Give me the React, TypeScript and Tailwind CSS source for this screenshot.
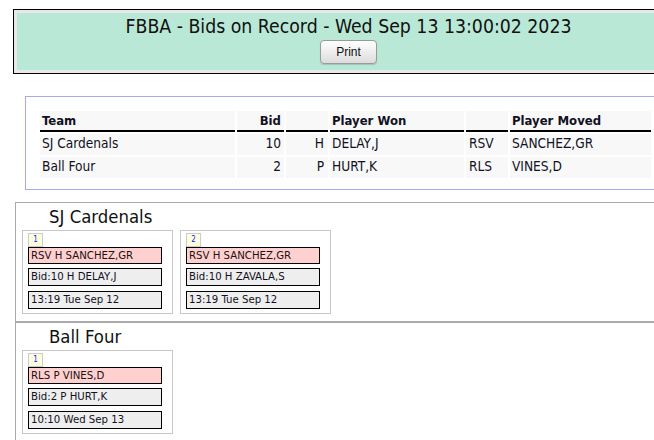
import React from "react";

const font = { fontFamily: '"DejaVu Sans Condensed", "DejaVu Sans", sans-serif' };

type Bid = { n: number; moved: string; bid: string; when: string };
type Team = { name: string; bids: Bid[] };

const teams: Team[] = [
  {
    name: "SJ Cardenals",
    bids: [
      { n: 1, moved: "RSV H SANCHEZ,GR", bid: "Bid:10 H DELAY,J", when: "13:19 Tue Sep 12" },
      { n: 2, moved: "RSV H SANCHEZ,GR", bid: "Bid:10 H ZAVALA,S", when: "13:19 Tue Sep 12" },
    ],
  },
  {
    name: "Ball Four",
    bids: [{ n: 1, moved: "RLS P VINES,D", bid: "Bid:2 P HURT,K", when: "10:10 Wed Sep 13" }],
  },
];

const rows = [
  { team: "SJ Cardenals", bid: "10", pos: "H", won: "DELAY,J", code: "RSV", moved: "SANCHEZ,GR" },
  { team: "Ball Four", bid: "2", pos: "P", won: "HURT,K", code: "RLS", moved: "VINES,D" },
];

function Card({ b }: { b: Bid }) {
  return (
    <div className="w-[151px] h-[84px] border border-[#c8c8c8] pt-[2px] pl-[5px] flex flex-col">
      <div className="w-[15px] h-[14px] border border-[#cccccc] bg-[#ffffe0] text-[8px] leading-[12px] text-[#1a1aff] text-center">
        {b.n}
      </div>
      <div className="w-[134px] h-[17px] border border-black bg-[#ffd0d0] text-[11.3px] leading-[15px] pl-[2px] text-[#221111]">
        {b.moved}
      </div>
      <div className="mt-[4px] w-[134px] h-[18px] border border-black bg-[#eeeeee] text-[11.3px] leading-[16px] pl-[2px] text-[#111122]">
        {b.bid}
      </div>
      <div className="mt-[5px] w-[134px] h-[18px] border border-black bg-[#eeeeee] text-[11.3px] leading-[16px] pl-[2px] text-[#111122]">
        {b.when}
      </div>
    </div>
  );
}

export default function App() {
  return (
    <div className="w-[654px] h-[440px] overflow-hidden bg-white relative" style={font}>
      <div className="w-[720px]">
        {/* Header */}
        <div className="ml-[13px] mt-[9px] w-[671px] border border-black bg-[#e8e8e8] p-[3px]">
          <div className="bg-[#b9e8d6] h-[57px] flex flex-col items-center">
            <div className="text-[19.3px] leading-[27px] text-[#111]">
              FBBA - Bids on Record - Wed Sep 13 13:00:02 2023
            </div>
            <button
              className="w-[57px] h-[24px] rounded-[4px] border border-[#9a9a9a] bg-gradient-to-b from-[#ffffff] to-[#dcdcdc] text-[12px] text-[#111] shadow-[0_1px_1px_rgba(0,0,0,0.15)]"
              style={{ fontFamily: '"Liberation Sans", Arial, sans-serif' }}
            >
              Print
            </button>
          </div>
        </div>

        {/* Summary table */}
        <div className="ml-[25px] mt-[22px] w-[680px] h-[94px] border border-[#a8a8f4] pl-[12px] pt-[12px]">
          <table className="border-separate border-spacing-[2px] text-[13.6px] text-[#111122]">
            <thead>
              <tr>
                <th className="w-[195px] h-[21px] bg-[#f8f8f8] border-b-2 border-black text-left pl-[2px] font-bold text-[13px] leading-[18px]">Team</th>
                <th className="w-[47px] bg-[#f8f8f8] border-b-2 border-black text-right pr-[3px] font-bold text-[13px] leading-[18px]">Bid</th>
                <th className="w-[42px] bg-[#f8f8f8] border-b-2 border-black"></th>
                <th className="w-[134px] bg-[#f8f8f8] border-b-2 border-black text-left pl-[2px] font-bold text-[13px] leading-[18px]">Player Won</th>
                <th className="w-[42px] bg-[#f8f8f8] border-b-2 border-black"></th>
                <th className="w-[141px] bg-[#f8f8f8] border-b-2 border-black text-left pl-[2px] font-bold text-[13px] leading-[18px]">Player Moved</th>
              </tr>
            </thead>
            <tbody>
              {rows.map((r) => (
                <tr key={r.team} className="h-[21px] leading-[17px]">
                  <td className="bg-[#f8f8f8] pl-[2px] pb-[2px]">{r.team}</td>
                  <td className="bg-[#f8f8f8] text-right pr-[3px] pb-[2px]">{r.bid}</td>
                  <td className="bg-[#f8f8f8] text-right pr-[4px] pb-[2px]">{r.pos}</td>
                  <td className="bg-[#f8f8f8] pl-[2px] pb-[2px]">{r.won}</td>
                  <td className="bg-[#f8f8f8] pl-[3px] pb-[2px]">{r.code}</td>
                  <td className="bg-[#f8f8f8] pl-[2px] pb-[2px]">{r.moved}</td>
                </tr>
              ))}
            </tbody>
          </table>
        </div>

        {/* Team sections */}
        <div className="ml-[15px] mt-[12px] w-[700px]">
          {teams.map((t, i) => (
            <div
              key={t.name}
              className={i === 0 ? "border border-[#aaaaaa] pl-[6px] h-[120px]" : "border-l border-r border-t border-[#aaaaaa] pl-[6px] h-[130px]"}
            >
              <div className="pl-[27px] h-[27px] text-[18.4px] leading-[27px] text-[#111]">{t.name}</div>
              <div className="flex gap-[7px]">
                {t.bids.map((b) => (
                  <Card key={b.n} b={b} />
                ))}
              </div>
            </div>
          ))}
        </div>
      </div>
    </div>
  );
}
